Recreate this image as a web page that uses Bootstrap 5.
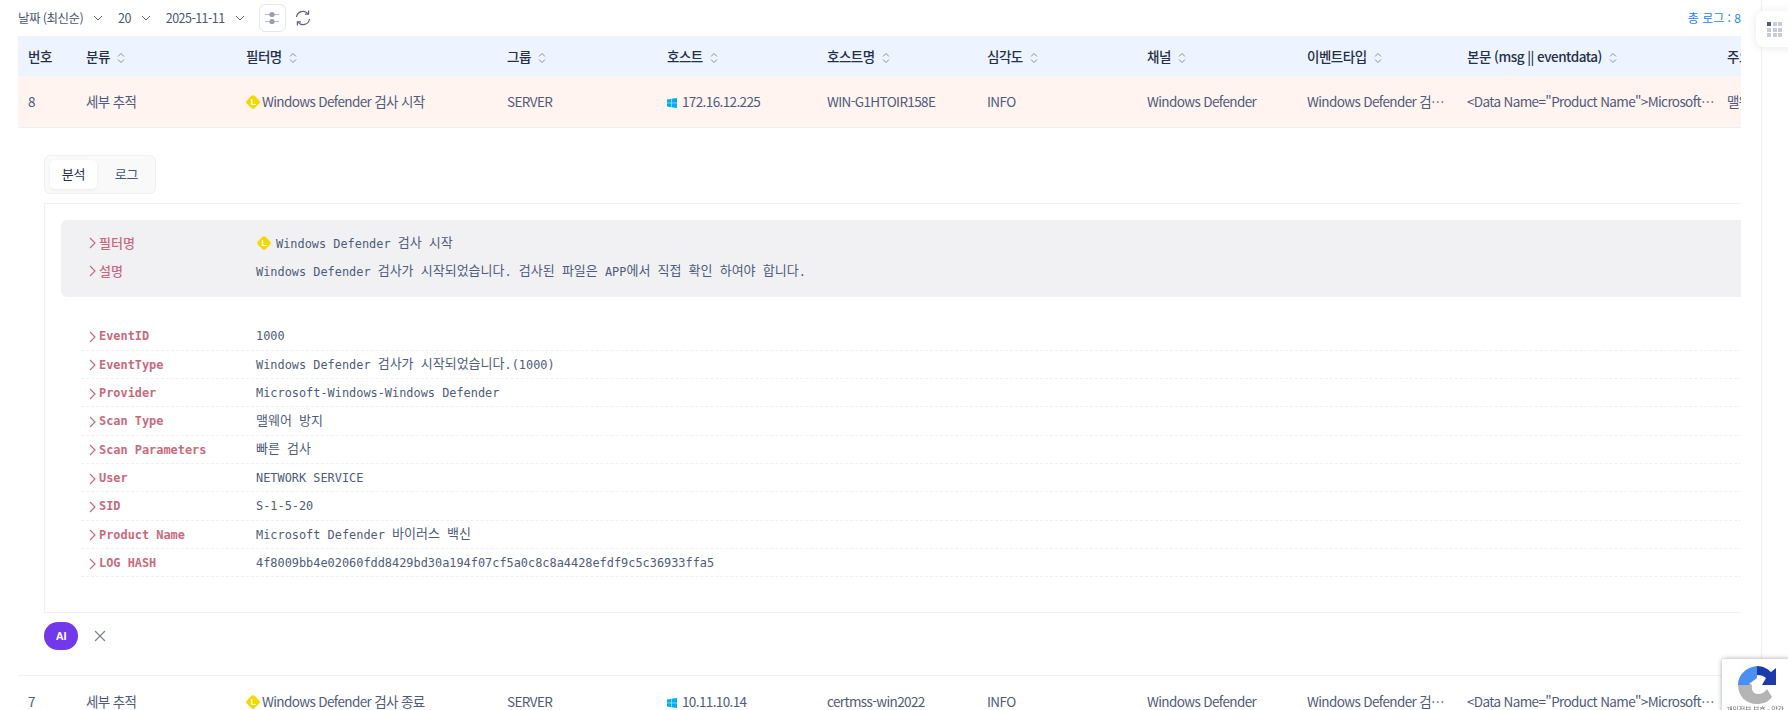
<!DOCTYPE html>
<html lang="ko">
<head>
<meta charset="utf-8">
<title>로그</title>
<link href="https://cdn.jsdelivr.net/npm/bootstrap@5.3.0/dist/css/bootstrap.min.css" rel="stylesheet">
<style>
html,body{height:710px;overflow:hidden;background:#fff;}
body{font-family:"Noto Sans CJK KR","Noto Sans",sans-serif;font-size:13px;color:#5e6278;}
.shell{width:1762px;height:710px;border-right:1px solid #eeeff2;padding:0 20px 0 18px;overflow:hidden;}
.toolbar{height:36px;font-size:12.5px;color:#4b5675;letter-spacing:-.55px;}
.pick{display:flex;align-items:center;gap:10px;}
.tool-btn{width:27px;height:28px;border:1px solid #e4e6f1;border-radius:6px;padding:0;background:#fff;}
.total{color:#1b84ff;letter-spacing:0;font-size:12px;}
.wrap{width:1723px;overflow:hidden;}
.grid-table{table-layout:fixed;width:1996px;margin:0;border-collapse:collapse;}
.grid-table>thead>tr>th{background:#edf4ff;height:40px;padding:0 10px;font-weight:500;color:#252f4a;font-size:13.5px;letter-spacing:-.5px;border:0;vertical-align:middle;white-space:nowrap;box-shadow:none;}
.grid-table>thead>tr>th+th{padding-left:12px;}
.grid-table>tbody>tr>td{height:51px;padding:0 0 0 12px;color:#4f5b7c;font-size:13.5px;letter-spacing:-.62px;border-bottom:1px solid #eff0f3;vertical-align:middle;white-space:nowrap;overflow:hidden;text-overflow:ellipsis;box-shadow:none;background:#fff;}
.grid-table>tbody>tr>td:first-child{padding-left:10px;}
.grid-table>tbody>tr.picked>td{background:#fff4ef;}
.grid-table>tbody>tr>td.detail{padding:27px 0 25px 26px;height:auto;overflow:hidden;letter-spacing:0;white-space:normal;}
.sort{margin-left:7px;vertical-align:-2px;}
.tag{vertical-align:-3px;margin-right:1px;margin-left:-1px;}
.win{vertical-align:-1px;margin-right:5px;}
.tabs{display:inline-flex;height:39px;padding:4px 5px;background:#f9f9f9;border:1px solid #f1f1f4;border-radius:6px;margin-bottom:9px;}
.tab-item{width:47px;display:flex;align-items:center;justify-content:center;border-radius:5px;font-size:13px;color:#4b5675;letter-spacing:-.2px;}
.tab-item+.tab-item{margin-left:6px;}
.tab-item.on{background:#fff;color:#252f4a;box-shadow:0 1px 3px rgba(0,0,0,.06);}
.panel{width:2100px;border:1px solid #f1f1f4;padding:16px 16px 35px;font-family:"DejaVu Sans Mono","Noto Sans CJK KR",monospace;font-size:11.9px;color:#4f5b7c;}
.summary{background:#f1f1f4;border-radius:6px;padding:9px 20px 12px;margin-bottom:26px;}
.summary .tag{margin:0 4px 0 0;}
.summary .val{padding-top:3px;}
.line{display:flex;align-items:center;height:28px;padding-left:8px;}
.kv{height:28.33px;border-bottom:1px dashed #eef0f3;margin-left:20px;padding-top:2px;}
.key{width:167px;flex:none;display:flex;align-items:center;gap:3px;color:#c96a7c;font-weight:700;}
.summary .key{font-family:"Noto Sans CJK KR",sans-serif;font-weight:500;font-size:13px;}
.val{white-space:nowrap;}
.ko{font-family:"Noto Sans CJK KR",sans-serif;font-size:13px;line-height:1;vertical-align:1px;}
.foot{margin-top:9px;gap:14px;}
.ai{width:34px;height:28px;border:0;padding:0;background:#7239ea;color:#fff;border-radius:14px;font-size:11px;font-weight:600;font-family:"Liberation Sans",sans-serif;letter-spacing:-.3px;}
.close-x{background:none;border:0;padding:0;line-height:0;margin-left:2px;}
.dock{position:fixed;top:11px;left:1756px;width:40px;height:36px;background:#fff;border-radius:8px 0 0 8px;box-shadow:0 1px 8px rgba(30,40,80,.1);padding:11px 0 0 11px;}
.dots{display:grid;grid-template-columns:repeat(3,4px);gap:1.5px;}
.dots i{display:block;height:4px;background:#c9cbd6;}
.dots i:first-child{background:#4f5b7c;}
.badge-rc{position:fixed;left:1722px;top:659px;width:70px;height:60px;background:#fff;border-radius:2px 0 0 0;box-shadow:0 0 5px rgba(0,0,0,.35);padding:6px 0 0 0;}
.badge-rc svg{display:block;margin:0 0 0 16px;}
.badge-rc span{display:block;width:66px;text-align:center;font-size:7px;line-height:8px;color:#777;letter-spacing:-.2px;}
</style>
</head>
<body>
<div class="shell">
  <div class="toolbar d-flex align-items-center">
    <div class="pick">날짜 (최신순)<svg width="10" height="6" viewBox="0 0 10 6"><path d="M1 1l4 4 4-4" fill="none" stroke="#5e6278" stroke-width="1"/></svg></div>
    <div class="pick" style="margin-left:15px">20<svg width="10" height="6" viewBox="0 0 10 6"><path d="M1 1l4 4 4-4" fill="none" stroke="#5e6278" stroke-width="1"/></svg></div>
    <div class="pick" style="margin-left:15px">2025-11-11<svg width="10" height="6" viewBox="0 0 10 6"><path d="M1 1l4 4 4-4" fill="none" stroke="#5e6278" stroke-width="1"/></svg></div>
    <button class="tool-btn d-flex align-items-center justify-content-center" style="margin-left:14px" aria-label="설정"><svg width="16" height="16" viewBox="0 0 16 16"><path d="M1 4.5h14M1 11.5h14" stroke="#b5b7c8" stroke-width="1"/><circle cx="8" cy="4.5" r="2.6" fill="#9a9db0"/><circle cx="8" cy="11.5" r="2.6" fill="#9a9db0"/></svg></button>
    <span class="ms-2 d-flex" aria-label="새로고침"><svg width="18" height="18" viewBox="0 0 18 18" fill="none" stroke="#5e6278" stroke-width="1.2"><path d="M2.5 8A6.5 6.5 0 0 1 14 4.8"/><path d="M15.5 10A6.5 6.5 0 0 1 4 13.2"/><path d="M14.6 1.6v3.6h-3.6"/><path d="M3.4 16.4v-3.6h3.6"/></svg></span>
    <div class="total ms-auto">총 로그 : 8</div>
  </div>
  <div class="wrap">
    <table class="table grid-table">
      <colgroup><col style="width:56px"><col style="width:160px"><col style="width:261px"><col style="width:160px"><col style="width:160px"><col style="width:160px"><col style="width:160px"><col style="width:160px"><col style="width:160px"><col style="width:260px"><col style="width:299px"></colgroup>
      <thead><tr>
        <th>번호</th>
        <th>분류<svg class="sort" width="8" height="12" viewBox="0 0 8 12"><path d="M1 4.5L4 1.5l3 3M1 7.5l3 3 3-3" fill="none" stroke="#8a8ea3" stroke-width="1"/></svg></th>
        <th>필터명<svg class="sort" width="8" height="12" viewBox="0 0 8 12"><path d="M1 4.5L4 1.5l3 3M1 7.5l3 3 3-3" fill="none" stroke="#8a8ea3" stroke-width="1"/></svg></th>
        <th>그룹<svg class="sort" width="8" height="12" viewBox="0 0 8 12"><path d="M1 4.5L4 1.5l3 3M1 7.5l3 3 3-3" fill="none" stroke="#8a8ea3" stroke-width="1"/></svg></th>
        <th>호스트<svg class="sort" width="8" height="12" viewBox="0 0 8 12"><path d="M1 4.5L4 1.5l3 3M1 7.5l3 3 3-3" fill="none" stroke="#8a8ea3" stroke-width="1"/></svg></th>
        <th>호스트명<svg class="sort" width="8" height="12" viewBox="0 0 8 12"><path d="M1 4.5L4 1.5l3 3M1 7.5l3 3 3-3" fill="none" stroke="#8a8ea3" stroke-width="1"/></svg></th>
        <th>심각도<svg class="sort" width="8" height="12" viewBox="0 0 8 12"><path d="M1 4.5L4 1.5l3 3M1 7.5l3 3 3-3" fill="none" stroke="#8a8ea3" stroke-width="1"/></svg></th>
        <th>채널<svg class="sort" width="8" height="12" viewBox="0 0 8 12"><path d="M1 4.5L4 1.5l3 3M1 7.5l3 3 3-3" fill="none" stroke="#8a8ea3" stroke-width="1"/></svg></th>
        <th>이벤트타입<svg class="sort" width="8" height="12" viewBox="0 0 8 12"><path d="M1 4.5L4 1.5l3 3M1 7.5l3 3 3-3" fill="none" stroke="#8a8ea3" stroke-width="1"/></svg></th>
        <th>본문 (msg || eventdata)<svg class="sort" width="8" height="12" viewBox="0 0 8 12"><path d="M1 4.5L4 1.5l3 3M1 7.5l3 3 3-3" fill="none" stroke="#8a8ea3" stroke-width="1"/></svg></th>
        <th>주요 내용</th>
      </tr></thead>
      <tbody>
        <tr class="picked">
          <td>8</td><td>세부 추적</td>
          <td><svg class="tag" width="16" height="16" viewBox="0 0 16 16"><rect x="2.5" y="2.5" width="11" height="11" rx="2.6" transform="rotate(45 8 8)" fill="#f5d800"/><text x="8" y="11" font-size="8.5" font-weight="700" text-anchor="middle" fill="#fff" font-family="Liberation Sans">L</text></svg>Windows Defender 검사 시작</td>
          <td>SERVER</td>
          <td><svg class="win" width="10" height="10" viewBox="0 0 16 16"><path fill="#00adef" d="M0 2.3 6.5 1.4v6.2H0zM7.3 1.3 16 0v7.6H7.3zM0 8.4h6.5v6.3L0 13.7zM7.3 8.4H16V16l-8.7-1.2z"/></svg>172.16.12.225</td>
          <td>WIN-G1HTOIR158E</td><td>INFO</td><td>Windows Defender</td><td>Windows Defender 검사가 시작되었습니다.</td>
          <td>&lt;Data Name="Product Name"&gt;Microsoft Defender 바이러스 백신</td><td>맬웨어 방지</td>
        </tr>
        <tr>
          <td colspan="11" class="detail">
            <div class="tabs"><div class="tab-item on">분석</div><div class="tab-item">로그</div></div>
            <div class="panel">
              <div class="summary">
                <div class="line"><div class="key"><svg width="7" height="12" viewBox="0 0 7 12"><path d="M1 1l5 5-5 5" fill="none" stroke="#c96a7c" stroke-width="1.2"/></svg>필터명</div><div class="val"><svg class="tag" width="16" height="16" viewBox="0 0 16 16"><rect x="2.5" y="2.5" width="11" height="11" rx="2.6" transform="rotate(45 8 8)" fill="#f5d800"/><text x="8" y="11" font-size="8.5" font-weight="700" text-anchor="middle" fill="#fff" font-family="Liberation Sans">L</text></svg>Windows Defender <span class="ko">검사</span> <span class="ko">시작</span></div></div>
                <div class="line"><div class="key"><svg width="7" height="12" viewBox="0 0 7 12"><path d="M1 1l5 5-5 5" fill="none" stroke="#c96a7c" stroke-width="1.2"/></svg>설명</div><div class="val">Windows Defender <span class="ko">검사가</span> <span class="ko">시작되었습니다</span>. <span class="ko">검사된</span> <span class="ko">파일은</span> APP<span class="ko">에서</span> <span class="ko">직접</span> <span class="ko">확인</span> <span class="ko">하여야</span> <span class="ko">합니다</span>.</div></div>
              </div>
              <div class="line kv"><div class="key"><svg width="7" height="12" viewBox="0 0 7 12"><path d="M1 1l5 5-5 5" fill="none" stroke="#c96a7c" stroke-width="1.2"/></svg>EventID</div><div class="val">1000</div></div>
              <div class="line kv"><div class="key"><svg width="7" height="12" viewBox="0 0 7 12"><path d="M1 1l5 5-5 5" fill="none" stroke="#c96a7c" stroke-width="1.2"/></svg>EventType</div><div class="val">Windows Defender <span class="ko">검사가</span> <span class="ko">시작되었습니다</span>.(1000)</div></div>
              <div class="line kv"><div class="key"><svg width="7" height="12" viewBox="0 0 7 12"><path d="M1 1l5 5-5 5" fill="none" stroke="#c96a7c" stroke-width="1.2"/></svg>Provider</div><div class="val">Microsoft-Windows-Windows Defender</div></div>
              <div class="line kv"><div class="key"><svg width="7" height="12" viewBox="0 0 7 12"><path d="M1 1l5 5-5 5" fill="none" stroke="#c96a7c" stroke-width="1.2"/></svg>Scan Type</div><div class="val"><span class="ko">맬웨어</span> <span class="ko">방지</span></div></div>
              <div class="line kv"><div class="key"><svg width="7" height="12" viewBox="0 0 7 12"><path d="M1 1l5 5-5 5" fill="none" stroke="#c96a7c" stroke-width="1.2"/></svg>Scan Parameters</div><div class="val"><span class="ko">빠른</span> <span class="ko">검사</span></div></div>
              <div class="line kv"><div class="key"><svg width="7" height="12" viewBox="0 0 7 12"><path d="M1 1l5 5-5 5" fill="none" stroke="#c96a7c" stroke-width="1.2"/></svg>User</div><div class="val">NETWORK SERVICE</div></div>
              <div class="line kv"><div class="key"><svg width="7" height="12" viewBox="0 0 7 12"><path d="M1 1l5 5-5 5" fill="none" stroke="#c96a7c" stroke-width="1.2"/></svg>SID</div><div class="val">S-1-5-20</div></div>
              <div class="line kv"><div class="key"><svg width="7" height="12" viewBox="0 0 7 12"><path d="M1 1l5 5-5 5" fill="none" stroke="#c96a7c" stroke-width="1.2"/></svg>Product Name</div><div class="val">Microsoft Defender <span class="ko">바이러스</span> <span class="ko">백신</span></div></div>
              <div class="line kv"><div class="key"><svg width="7" height="12" viewBox="0 0 7 12"><path d="M1 1l5 5-5 5" fill="none" stroke="#c96a7c" stroke-width="1.2"/></svg>LOG HASH</div><div class="val">4f8009bb4e02060fdd8429bd30a194f07cf5a0c8c8a4428efdf9c5c36933ffa5</div></div>
            </div>
            <div class="foot d-flex align-items-center">
              <button class="ai">AI</button>
              <button class="close-x" aria-label="닫기"><svg width="12" height="12" viewBox="0 0 12 12"><path d="M1 1l10 10M11 1L1 11" stroke="#7e8299" stroke-width="1.2"/></svg></button>
            </div>
          </td>
        </tr>
        <tr>
          <td>7</td><td>세부 추적</td>
          <td><svg class="tag" width="16" height="16" viewBox="0 0 16 16"><rect x="2.5" y="2.5" width="11" height="11" rx="2.6" transform="rotate(45 8 8)" fill="#f5d800"/><text x="8" y="11" font-size="8.5" font-weight="700" text-anchor="middle" fill="#fff" font-family="Liberation Sans">L</text></svg>Windows Defender 검사 종료</td>
          <td>SERVER</td>
          <td><svg class="win" width="10" height="10" viewBox="0 0 16 16"><path fill="#00adef" d="M0 2.3 6.5 1.4v6.2H0zM7.3 1.3 16 0v7.6H7.3zM0 8.4h6.5v6.3L0 13.7zM7.3 8.4H16V16l-8.7-1.2z"/></svg>10.11.10.14</td>
          <td>certmss-win2022</td><td>INFO</td><td>Windows Defender</td><td>Windows Defender 검사가 종료되었습니다.</td>
          <td>&lt;Data Name="Product Name"&gt;Microsoft Defender 바이러스 백신</td><td>맬웨어 방지</td>
        </tr>
      </tbody>
    </table>
  </div>
</div>
<div class="dock"><div class="dots"><i></i><i></i><i></i><i></i><i></i><i></i><i></i><i></i><i></i></div></div>
<div class="badge-rc">
  <svg width="38" height="40" viewBox="0 0 38 40">
    <path d="M0 20C0 10 8 2 19 1V13L11 19l3 1z" fill="#4a90f2"/>
    <path d="M19 1C25 1 30 4 33 7L38 3V20H24L28 13C26 11 23 10 19 10z" fill="#1c3aa9"/>
    <path d="M0 20H14C13 26 16 29 20 29C24 29 27 27 29 24L34 32C30 37 25 39 19 39C8 39 0 31 0 20z" fill="#b4b4b4"/>
  </svg>
  <span>개인정보 보호 - 약관</span>
</div>
</body>
</html>
